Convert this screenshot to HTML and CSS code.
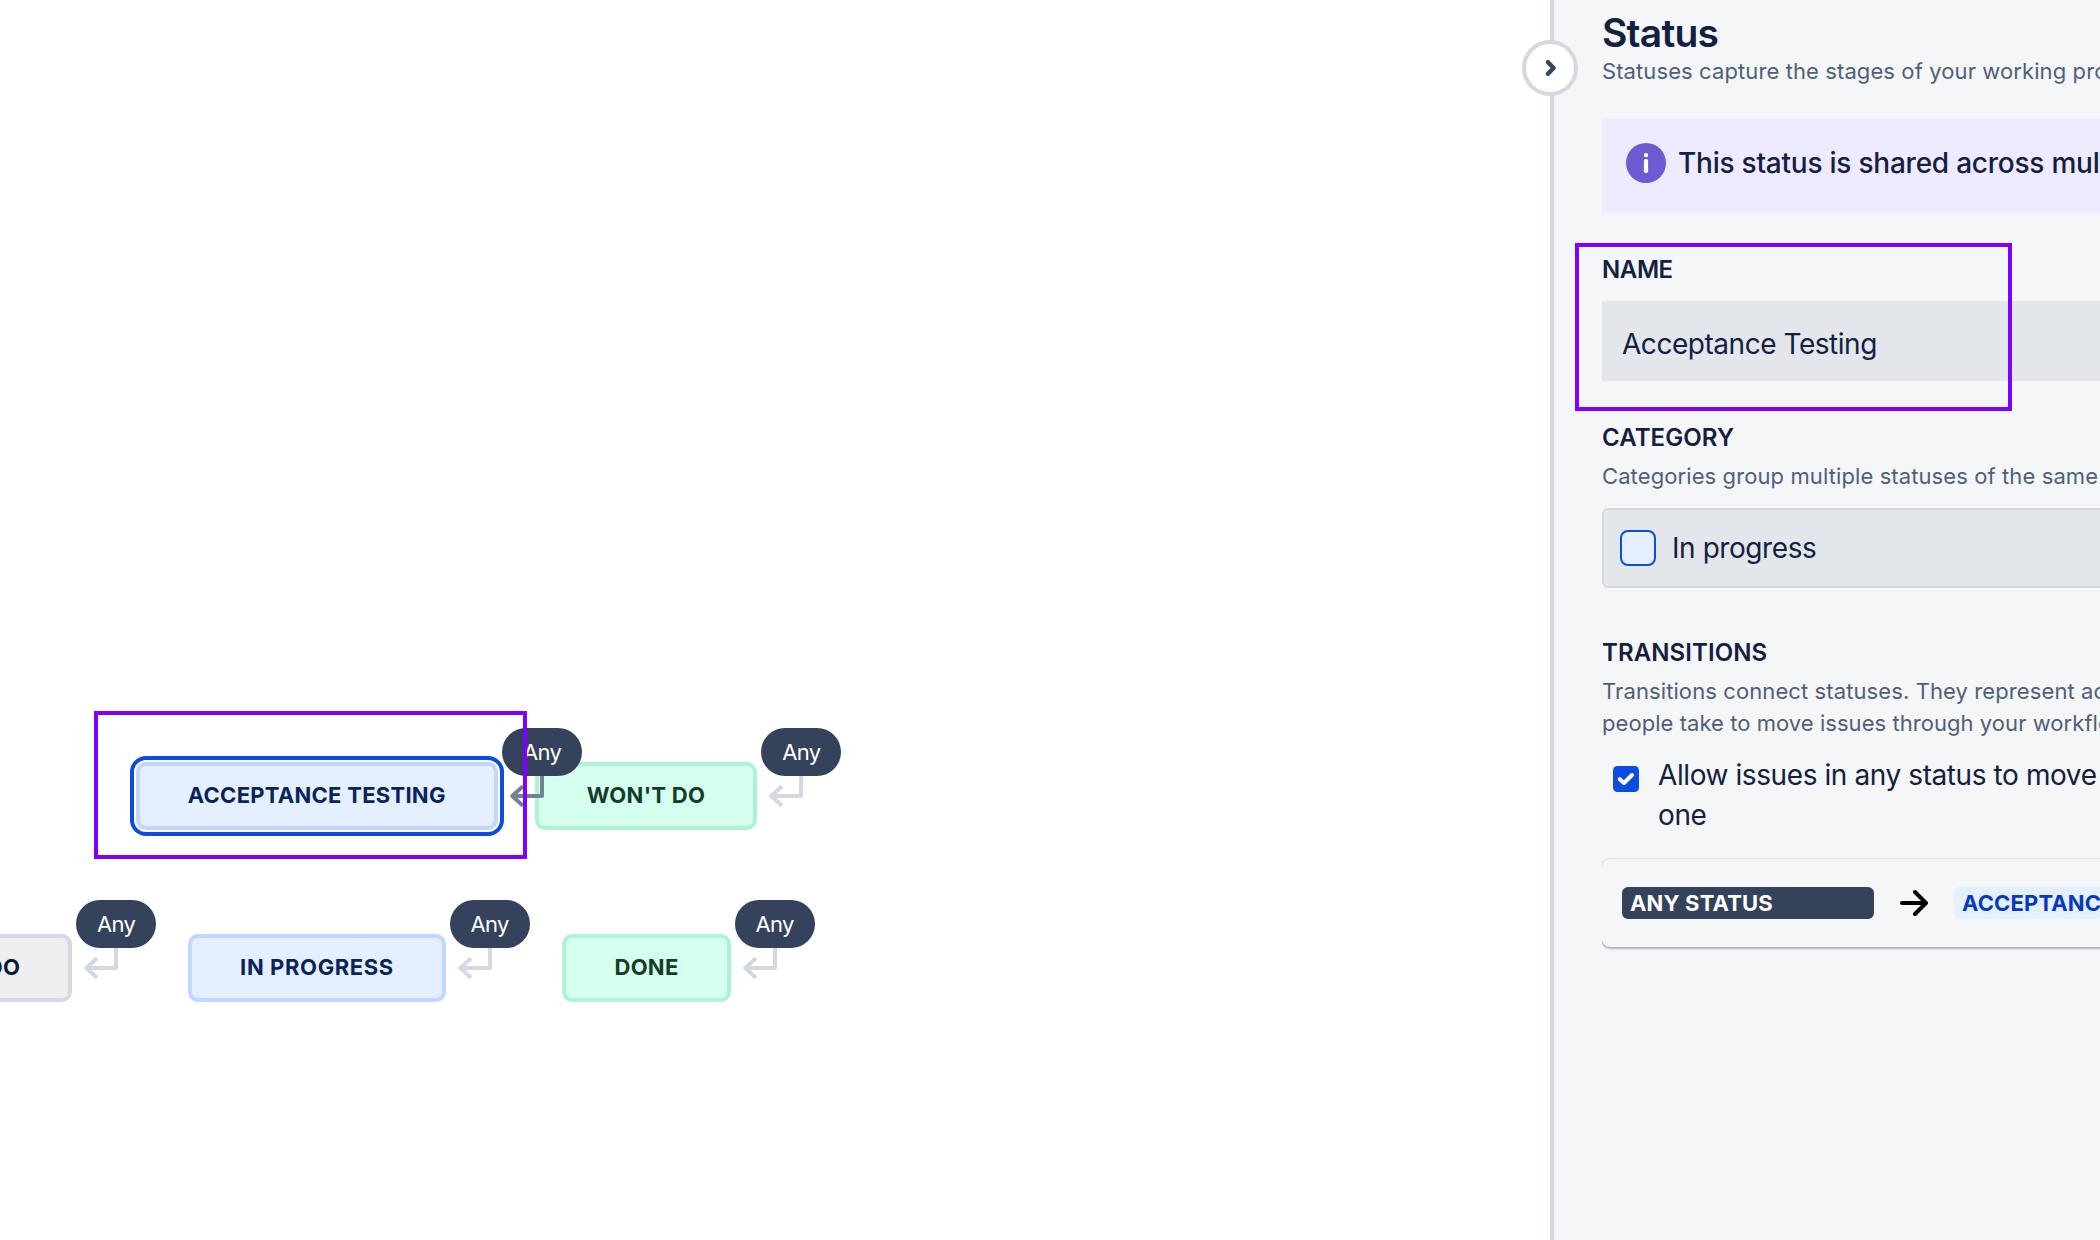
FILE: index.html
```
<!DOCTYPE html>
<html lang="en">
<head>
<meta charset="utf-8">
<title>Workflow editor</title>
<link rel="stylesheet" href="styles.css">
</head>
<body>
<svg class="defs" aria-hidden="true">
  <symbol id="loop" viewBox="0 0 38 34">
    <path d="M34 0V20H4M15 10.2L4.2 20L15 29.8" fill="none" stroke="currentColor" stroke-width="4" stroke-linejoin="round"/>
  </symbol>
</svg>
<main class="editor">
  <section class="canvas">
    <div class="node green wont-do"><span class="label">WON'T DO</span></div>
    <div class="node blue selected acceptance"><span class="label">ACCEPTANCE TESTING</span></div>
    <div class="node grey to-do"><span class="label">TO DO</span></div>
    <div class="node blue in-progress"><span class="label wide">IN PROGRESS</span></div>
    <div class="node green done"><span class="label">DONE</span></div>

    <div class="any any-acceptance active"><svg class="loop"><use href="#loop"/></svg><span class="pill">Any</span></div>
    <div class="any any-wont-do"><svg class="loop"><use href="#loop"/></svg><span class="pill">Any</span></div>
    <div class="any any-to-do"><svg class="loop"><use href="#loop"/></svg><span class="pill">Any</span></div>
    <div class="any any-in-progress"><svg class="loop"><use href="#loop"/></svg><span class="pill">Any</span></div>
    <div class="any any-done"><svg class="loop"><use href="#loop"/></svg><span class="pill">Any</span></div>
    <div class="highlight highlight-node"></div>
  </section>

  <aside class="panel">
    <button class="toggle" aria-label="Collapse panel">
      <svg width="16" height="20" viewBox="0 0 16 20"><path d="M6 4.2L11.6 10L6 15.8" fill="none" stroke="#344563" stroke-width="4.4" stroke-linecap="round" stroke-linejoin="round"/></svg>
    </button>
    <div class="content">
      <h1 class="title">Status</h1>
      <p class="hint">Statuses capture the stages of your working process.</p>

      <div class="info">
        <svg class="info-icon" width="40" height="40" viewBox="0 0 40 40"><circle cx="20" cy="20" r="20" fill="#6e5ad2"/><circle cx="20" cy="12.1" r="2.2" fill="#fff"/><rect x="17.9" y="16" width="4.2" height="14" rx="1.8" fill="#fff"/></svg>
        <span class="info-text">This status is shared across multiple workflows.</span>
      </div>

      <section class="group name-group">
        <h2 class="heading tight">NAME</h2>
        <div class="field">Acceptance Testing</div>
      </section>

      <section class="group category-group">
        <h2 class="heading">CATEGORY</h2>
        <p class="hint">Categories group multiple statuses of the same type.</p>
        <div class="select"><span class="swatch"></span><span>In progress</span></div>
      </section>

      <section class="group transitions-group">
        <h2 class="heading">TRANSITIONS</h2>
        <p class="hint">Transitions connect statuses. They represent actions<br><span class="snug">people take to move issues through your workflow.</span></p>
        <div class="option">
          <svg class="check" width="26" height="26" viewBox="0 0 26 26"><rect width="26" height="26" rx="4.5" fill="#0c4ce0"/><path d="M6.8 13.2L11 17L19 9" fill="none" stroke="#fff" stroke-width="4" stroke-linecap="round" stroke-linejoin="round"/></svg>
          <span class="option-text">Allow issues in any status to move to this<br>one</span>
        </div>
        <div class="clip">
          <div class="card">
            <span class="lozenge dark">ANY STATUS</span>
            <svg class="arrow" width="28" height="28" viewBox="0 0 28 28"><path d="M2 14H25M15 3L26 14L15 25" fill="none" stroke="#000" stroke-width="4" stroke-linecap="round" stroke-linejoin="round"/></svg>
            <span class="lozenge light">ACCEPTANCE TESTING</span>
          </div>
        </div>
      </section>
    </div>
    <div class="highlight highlight-name"></div>
  </aside>
</main>
</body>
</html>
```
FILE: styles.css
```
* { box-sizing: border-box; }
body {
  margin: 0;
  background: #fff;
  color: #14203f;
  font-family: Inter, "Liberation Sans", sans-serif;
}
h1, h2, p { margin: 0; }
.defs { display: none; }

.editor {
  display: flex;
  width: 100%;
  height: 1240px;
  overflow: hidden;
}

/* Workflow diagram */
.canvas {
  position: relative;
  flex: 0 0 1550px;
  overflow: hidden;
}
.node {
  position: absolute;
  display: flex;
  align-items: center;
  justify-content: center;
  height: 68px;
  padding-bottom: 2px;
  border: 4px solid;
  border-radius: 10px;
}
.label {
  font-size: 22px;
  font-weight: 700;
  line-height: 32px;
  letter-spacing: 0.27px;
  white-space: nowrap;
}
.label.wide { letter-spacing: 0.62px; }
.blue { background: #e4efff; border-color: #c1d7ff; color: #0b2458; }
.green { background: #d5ffee; border-color: #aff3d2; color: #143c28; }
.grey { background: #eeeff1; border-color: #d5d8e0; color: #0c1733; }
.selected { box-shadow: 0 0 0 2px #fff, 0 0 0 6px #0c4ce0; }

.acceptance { left: 135.5px; top: 762px; width: 362.5px; }
.wont-do { left: 535px; top: 762px; width: 222px; }
.to-do { left: -102px; top: 934px; width: 174px; }
.in-progress { left: 188px; top: 934px; width: 258px; }
.done { left: 562px; top: 934px; width: 169px; }

.any { position: absolute; width: 80px; color: #d5d8e0; }
.any.active { color: #758195; }
.any-acceptance { left: 502px; top: 728px; }
.any-wont-do { left: 761.4px; top: 728px; }
.any-to-do { left: 76px; top: 900px; }
.any-in-progress { left: 449.6px; top: 900px; }
.any-done { left: 734.5px; top: 900px; }
.pill {
  position: relative;
  display: block;
  height: 48px;
  border-radius: 24px;
  background: #35425c;
  color: #fff;
  font-size: 22px;
  line-height: 48px;
  letter-spacing: -0.7px;
  text-align: center;
}
.loop { position: absolute; left: 6px; top: 48px; width: 38px; height: 34px; }

.highlight { position: absolute; border: 4px solid #8000ff; }
.highlight-node { left: 94px; top: 711px; width: 433px; height: 148px; }
.highlight-name { left: 21px; top: 243px; width: 437px; height: 168px; }

/* Details panel */
.panel {
  position: relative;
  flex: 1 1 0;
  min-width: 0;
  padding: 9px 0 0 48px;
  border-left: 4px solid #d5d8e0;
  background: #f4f6f8;
}
.toggle {
  position: absolute;
  left: -32px;
  top: 40px;
  display: flex;
  align-items: center;
  justify-content: center;
  width: 56px;
  height: 56px;
  padding: 0;
  border: 4px solid #d5d8e0;
  border-radius: 50%;
  background: #fff;
}
.content { overflow: hidden; white-space: nowrap; }
.title {
  font-size: 39px;
  font-weight: 600;
  line-height: 48px;
  letter-spacing: -0.75px;
}
.hint {
  color: #505f79;
  font-size: 22px;
  line-height: 32px;
  letter-spacing: 0.1px;
}
.title + .hint { margin-top: -2px; }
.snug { letter-spacing: 0.05px; }
.info {
  display: flex;
  gap: 12px;
  height: 94px;
  margin-top: 32px;
  padding: 24px;
  background: #eeeaff;
}
.info-icon, .check, .arrow { flex: none; }
.info-text {
  font-size: 28px;
  font-weight: 500;
  line-height: 40px;
  letter-spacing: -0.23px;
}
.heading {
  font-size: 24px;
  font-weight: 600;
  line-height: 32px;
  letter-spacing: 0.1px;
}
.heading.tight { letter-spacing: -0.4px; }
.group .hint { margin-top: 6px; }
.name-group, .category-group { margin-top: 41px; }
.transitions-group { margin-top: 49px; }
.field {
  height: 80px;
  margin-top: 15px;
  padding: 3px 20px 0;
  background: #e3e6eb;
  font-size: 28px;
  line-height: 80px;
  letter-spacing: -0.46px;
}
.select {
  display: flex;
  align-items: center;
  gap: 16px;
  height: 80px;
  margin: 16px -10px 0 0;
  padding-left: 16px;
  border: 2px solid #d3d8de;
  border-radius: 6px;
  background: #e3e6eb;
  font-size: 28px;
  letter-spacing: -0.43px;
}
.swatch {
  width: 36px;
  height: 36px;
  border: 2px solid #0c4ce0;
  border-radius: 8px;
  background: #e4efff;
}
.option {
  display: flex;
  gap: 19px;
  margin-top: 16px;
  padding-left: 11px;
}
.check { margin-top: 11px; }
.option-text {
  font-size: 28px;
  line-height: 40px;
  letter-spacing: -0.41px;
}
.clip { overflow: hidden; padding: 24px 0 8px; }
.card {
  display: flex;
  align-items: center;
  height: 88px;
  margin-right: -10px;
  padding-left: 20px;
  border-radius: 8px;
  background: #f4f6f8;
  box-shadow: 0 2px 2px rgba(9, 30, 66, .25), 0 0 2px rgba(9, 30, 66, .31);
}
.lozenge {
  flex: none;
  height: 32px;
  padding: 0 8px;
  border-radius: 6px;
  font-size: 22px;
  font-weight: 700;
  line-height: 32px;
  letter-spacing: 0.15px;
}
.lozenge.dark { width: 252px; background: #35425c; color: #fff; }
.lozenge.light { background: #e4efff; color: #0639bd; }
.arrow { margin: 0 26px; }
```
